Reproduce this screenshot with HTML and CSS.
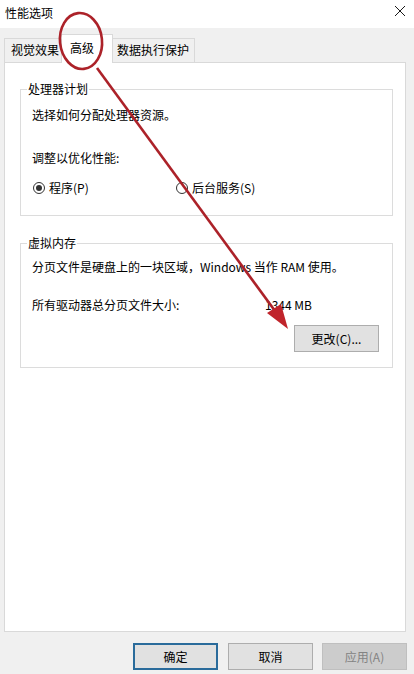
FILE: index.html
```html
<!DOCTYPE html>
<html lang="zh-CN">
<head>
<meta charset="utf-8">
<title>性能选项</title>
<link rel="stylesheet" href="styles.css">
</head>
<body>
<div class="window">
  <div class="titlebar">
    <span class="title">性能选项</span>
    <svg class="close" width="12" height="12" viewBox="0 0 12 12"><path d="M1 1 L11 11 M11 1 L1 11" stroke="#1a1a1a" stroke-width="1"/></svg>
  </div>
  <div class="tabs">
    <div class="tab tab-first">视觉效果</div>
    <div class="tab active">高级</div>
    <div class="tab tab-last">数据执行保护</div>
  </div>
  <div class="panel">
    <fieldset class="group group-cpu">
      <legend>处理器计划</legend>
      <p class="line">选择如何分配处理器资源。</p>
      <p class="line line-adjust">调整以优化性能:</p>
      <div class="radios">
        <label class="radio radio-first"><span class="dot checked"></span>程序(P)</label>
        <label class="radio"><span class="dot"></span>后台服务(S)</label>
      </div>
    </fieldset>
    <fieldset class="group group-mem">
      <legend>虚拟内存</legend>
      <p class="line">分页文件是硬盘上的一块区域，Windows 当作 RAM 使用。</p>
      <div class="size-row"><span class="size-label">所有驱动器总分页文件大小:</span><span>1344 MB</span></div>
      <div class="change-row"><button class="btn">更改(C)...</button></div>
    </fieldset>
  </div>
  <div class="footer">
    <button class="btn btn-default">确定</button>
    <button class="btn btn-cancel">取消</button>
    <button class="btn btn-disabled">应用(A)</button>
  </div>
  <svg class="annot" width="414" height="674" viewBox="0 0 414 674">
    <ellipse cx="81" cy="41" rx="21" ry="28" fill="none" stroke="#ac2229" stroke-width="2.6" transform="rotate(-6 81 41)"/>
    <line x1="97" y1="68" x2="278" y2="315" stroke="#ac2229" stroke-width="2.6"/>
    <polygon points="288,329 267,313 281,304" fill="#c0242b"/>
  </svg>
</div>
</body>
</html>
```
FILE: styles.css
```css
html, body {
  margin: 0;
  padding: 0;
}
body {
  background: #f0f0f0;
  font-family: "Noto Sans CJK SC", "Noto Sans", sans-serif;
  font-size: 12px;
  color: #000;
}
.window {
  position: relative;
  width: 414px;
  height: 674px;
  display: flex;
  flex-direction: column;
  background: #f0f0f0;
  overflow: hidden;
}
.titlebar {
  height: 28px;
  background: #fff;
  display: flex;
  align-items: center;
  justify-content: space-between;
  padding: 0 8px 2px 5px;
  box-sizing: border-box;
}
.title {
  font-size: 12px;
  line-height: 16px;
}
.close {
  margin-top: -4px;
}
.tabs {
  height: 34px;
  display: flex;
  align-items: flex-end;
  padding-left: 4px;
  box-sizing: border-box;
  position: relative;
  z-index: 1;
}
.tab {
  height: 24px;
  box-sizing: border-box;
  border: 1px solid #d9d9d9;
  border-bottom: none;
  background: #f0f0f0;
  line-height: 22px;
  white-space: nowrap;
  flex: none;
}
.tab-first {
  width: 58px;
  padding-left: 6px;
}
.tab.active {
  height: 29px;
  background: #fff;
  margin-bottom: -1px;
  width: 52px;
  padding-left: 8px;
  margin-left: -1px;
  line-height: 25px;
}
.tab-last {
  width: 82px;
  padding-left: 4px;
  border-left: none;
}
.panel {
  margin: 0 8px 0 4px;
  height: 570px;
  box-sizing: border-box;
  background: #fff;
  border: 1px solid #d9d9d9;
  padding: 18px 12px 0 15px;
}
.group {
  margin: 0;
  border: 1px solid #dcdcdc;
  padding: 10px 0 19px 11px;
}
.group legend {
  margin-left: -5px;
  padding: 0 1px;
  line-height: 16px;
}
.group-mem {
  margin-top: 19px;
  padding-top: 8px;
  padding-bottom: 15px;
}
.line {
  margin: 0;
  line-height: 16px;
}
.line-adjust {
  margin-top: 27px;
}
.radios {
  margin-top: 14px;
  display: flex;
  line-height: 16px;
}
.radio {
  display: flex;
  align-items: center;
  gap: 4px;
}
.radio-first {
  width: 143px;
}
.dot {
  width: 12px;
  height: 12px;
  box-sizing: border-box;
  border: 1px solid #333;
  border-radius: 50%;
  display: inline-flex;
  align-items: center;
  justify-content: center;
  margin-left: 1px;
}
.dot.checked::after {
  content: "";
  width: 6px;
  height: 6px;
  border-radius: 50%;
  background: #333;
}
.size-row {
  margin-top: 22px;
  display: flex;
  line-height: 16px;
}
.size-label {
  width: 233px;
}
.change-row {
  margin-top: 12px;
  display: flex;
  justify-content: flex-end;
  padding-right: 13px;
}
.btn {
  width: 85px;
  height: 27px;
  box-sizing: border-box;
  background: #e1e1e1;
  border: 1px solid #adadad;
  font-family: inherit;
  font-size: 12px;
  color: #000;
  padding: 0;
  line-height: 16px;
  flex: none;
}
.footer {
  flex: 1;
  display: flex;
  justify-content: flex-end;
  align-items: flex-start;
  padding: 11px 7px 0 0;
}
.btn-default {
  border: 2px solid #2a6b9b;
}
.btn-cancel {
  margin-left: 10px;
}
.btn-disabled {
  margin-left: 9px;
  background: #cccccc;
  border-color: #bfbfbf;
  color: #838383;
}
.annot {
  position: absolute;
  top: 0;
  left: 0;
  pointer-events: none;
  z-index: 5;
}
```
